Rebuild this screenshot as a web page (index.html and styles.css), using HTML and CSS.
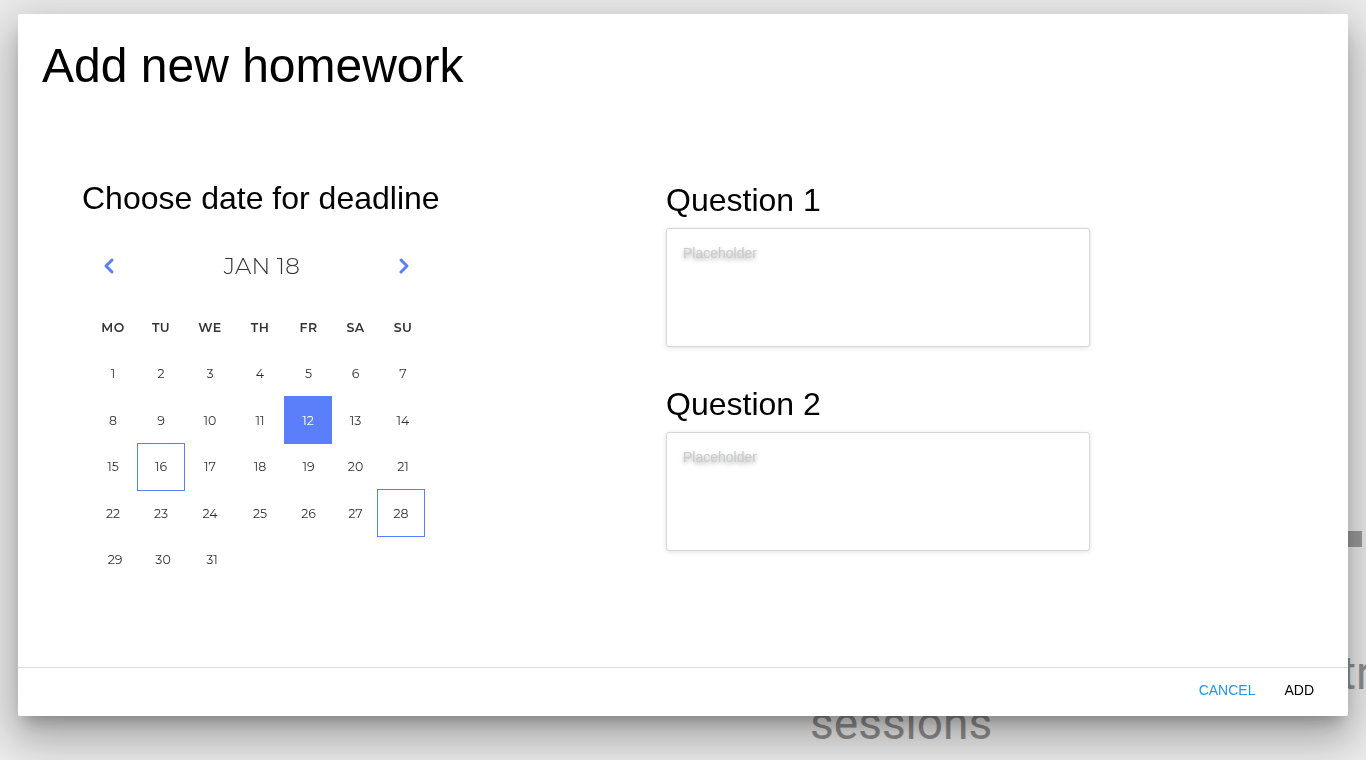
FILE: index.html
```html
<!DOCTYPE html>
<html lang="en">
<head>
<meta charset="utf-8">
<title>Add new homework</title>
<link rel="stylesheet" href="styles.css">
</head>
<body>
<div class="page">
  <div class="page-thumb"></div>
  <div class="page-line page-line-1">tr</div>
  <div class="page-line page-line-2">sessions</div>
</div>

<div class="dialog" role="dialog" aria-labelledby="dlg-title">
  <h1 class="dialog-title" id="dlg-title">Add new homework</h1>

  <div class="dialog-content">
    <section class="deadline">
      <h2 class="section-title">Choose date for deadline</h2>
      <div class="calendar">
        <div class="cal-nav">
          <button class="cal-arrow" aria-label="Previous month">
            <svg width="12" height="18" viewBox="0 0 12 18"><path d="M9 3 L3 9 L9 15" fill="none" stroke="#5b7ffb" stroke-width="3" stroke-linecap="round" stroke-linejoin="round"/></svg>
          </button>
          <div class="cal-month">JAN 18</div>
          <button class="cal-arrow" aria-label="Next month">
            <svg width="12" height="18" viewBox="0 0 12 18"><path d="M3 3 L9 9 L3 15" fill="none" stroke="#5b7ffb" stroke-width="3" stroke-linecap="round" stroke-linejoin="round"/></svg>
          </button>
        </div>
        <div class="cal-grid">
          <div class="cal-dow">MO</div><div class="cal-dow">TU</div><div class="cal-dow">WE</div><div class="cal-dow">TH</div><div class="cal-dow">FR</div><div class="cal-dow">SA</div><div class="cal-dow">SU</div>
          <div class="cal-day"><span>1</span></div><div class="cal-day"><span>2</span></div><div class="cal-day"><span>3</span></div><div class="cal-day"><span>4</span></div><div class="cal-day"><span>5</span></div><div class="cal-day"><span>6</span></div><div class="cal-day"><span>7</span></div>
          <div class="cal-day"><span>8</span></div><div class="cal-day"><span>9</span></div><div class="cal-day"><span>10</span></div><div class="cal-day"><span>11</span></div><div class="cal-day selected"><span>12</span></div><div class="cal-day"><span>13</span></div><div class="cal-day"><span>14</span></div>
          <div class="cal-day"><span>15</span></div><div class="cal-day marked"><span>16</span></div><div class="cal-day"><span>17</span></div><div class="cal-day"><span>18</span></div><div class="cal-day"><span>19</span></div><div class="cal-day"><span>20</span></div><div class="cal-day"><span>21</span></div>
          <div class="cal-day"><span>22</span></div><div class="cal-day"><span>23</span></div><div class="cal-day"><span>24</span></div><div class="cal-day"><span>25</span></div><div class="cal-day"><span>26</span></div><div class="cal-day"><span>27</span></div><div class="cal-day marked sun"><span>28</span></div>
          <div class="cal-day shift"><span>29</span></div><div class="cal-day shift"><span>30</span></div><div class="cal-day shift"><span>31</span></div>
        </div>
      </div>
    </section>

    <section class="questions">
      <div class="question">
        <h2 class="section-title">Question 1</h2>
        <textarea class="q-input" placeholder="Placeholder"></textarea>
      </div>
      <div class="question">
        <h2 class="section-title">Question 2</h2>
        <textarea class="q-input" placeholder="Placeholder"></textarea>
      </div>
    </section>
  </div>

  <div class="dialog-actions">
    <button class="btn btn-cancel">CANCEL</button>
    <button class="btn btn-add">ADD</button>
  </div>
</div>
</body>
</html>
```

FILE: styles.css
```css
* { box-sizing: border-box; }

html, body {
  margin: 0;
  height: 100%;
}

body {
  background: #ebebeb;
  font-family: "Liberation Sans", Arial, sans-serif;
  overflow: hidden;
}

/* underlying page (mostly covered by the dialog) */
.page {
  display: flex;
  flex-direction: column;
  padding-top: 531px;
  font-family: Roboto, "Liberation Sans", sans-serif;
  font-weight: 400;
  color: #8e8e8e;
}

.page-thumb {
  width: 14px;
  height: 16px;
  margin-left: 1348px;
  background: #9a9a9a;
}

.page-line {
  font-size: 46px;
  line-height: 50px;
  white-space: nowrap;
}

.page-line-1 {
  margin-top: 101px;
  margin-left: 1341px;
}

.page-line-2 {
  margin-left: 810px;
}

/* dialog */
.dialog {
  position: fixed;
  top: 14px;
  left: 18px;
  width: 1330px;
  height: 702px;
  background: #fff;
  border-radius: 2px;
  display: flex;
  flex-direction: column;
  box-shadow:
    0 11px 15px -7px rgba(0, 0, 0, 0.25),
    0 24px 38px 3px rgba(0, 0, 0, 0.18),
    0 9px 46px 8px rgba(0, 0, 0, 0.14);
}

.dialog-title {
  margin: 0;
  padding: 24px 24px 20px;
  font-size: 48px;
  font-weight: 400;
  line-height: 55px;
  color: #000;
}

.dialog-content {
  flex: 1;
  display: flex;
  padding: 67px 0 0 64px;
}

.section-title {
  margin: 0;
  font-size: 32px;
  font-weight: 400;
  line-height: 37px;
  color: #000;
}

.deadline {
  width: 584px;
}

/* calendar */
.calendar {
  margin-top: 27px;
  margin-left: 7px;
  width: 338px;
  font-family: Montserrat, Inter, "Open Sans", sans-serif;
  color: #333;
}

.cal-nav {
  display: grid;
  grid-template-columns: 40px 1fr 40px;
  align-items: center;
  height: 44px;
  margin-bottom: 16px;
}

.cal-arrow {
  border: 0;
  background: none;
  padding: 0;
  display: flex;
  justify-content: center;
  align-items: center;
  height: 44px;
  cursor: pointer;
}

.cal-arrow:last-child {
  justify-content: flex-start;
  padding-left: 11px;
}

.cal-month {
  text-align: center;
  padding-left: 8px;
  font-size: 23px;
  font-weight: 300;
  letter-spacing: 0.3px;
  color: #333;
}

.cal-grid {
  display: grid;
  grid-template-columns: 48px 48px 50px 50px 47px 47px 48px;
  grid-auto-rows: 46.5px;
}

.cal-dow {
  display: flex;
  align-items: center;
  justify-content: center;
  font-size: 12.5px;
  font-weight: 600;
  letter-spacing: 0.5px;
  color: #333;
}

.cal-day {
  display: flex;
  align-items: center;
  justify-content: center;
  font-size: 12.5px;
  color: #333;
}

.cal-day span {
  display: flex;
  align-items: center;
  justify-content: center;
  width: 48px;
  height: 48px;
  flex: none;
}

.cal-day.selected span {
  background: #5b7ffb;
  color: #fff;
  margin-left: -1px;
}

.cal-day.marked span {
  border: 1px solid #5b7ffb;
}

.cal-day.sun span {
  margin-left: -4px;
}

.cal-day.shift span {
  padding-left: 4px;
}

/* questions */
.questions {
  display: flex;
  flex-direction: column;
  gap: 39px;
  padding-top: 2px;
}

.question {
  display: flex;
  flex-direction: column;
  gap: 9px;
}

.q-input {
  display: block;
  width: 424px;
  height: 119px;
  margin: 0;
  padding: 16px;
  resize: none;
  border: 1px solid #d3d6da;
  border-radius: 3px;
  box-shadow: 0 1px 5px rgba(0, 0, 0, 0.12);
  font-family: "Liberation Sans", Arial, sans-serif;
  font-size: 14px;
  line-height: 16px;
  outline: none;
}

.q-input::placeholder {
  color: #c9ccce;
  text-shadow: 0 2px 4px rgba(0, 0, 0, 0.35);
}

/* actions */
.dialog-actions {
  display: flex;
  justify-content: flex-end;
  gap: 1px;
  border-top: 1px solid #dcdcdc;
  margin-top: auto;
  padding: 4px 20px 8px;
}

.btn {
  border: 0;
  background: none;
  height: 36px;
  padding: 0 14px;
  font-family: "Liberation Sans", Arial, sans-serif;
  font-size: 14px;
  cursor: pointer;
}

.btn-cancel { color: #2196f3; }
.btn-add { color: #000; }
```
